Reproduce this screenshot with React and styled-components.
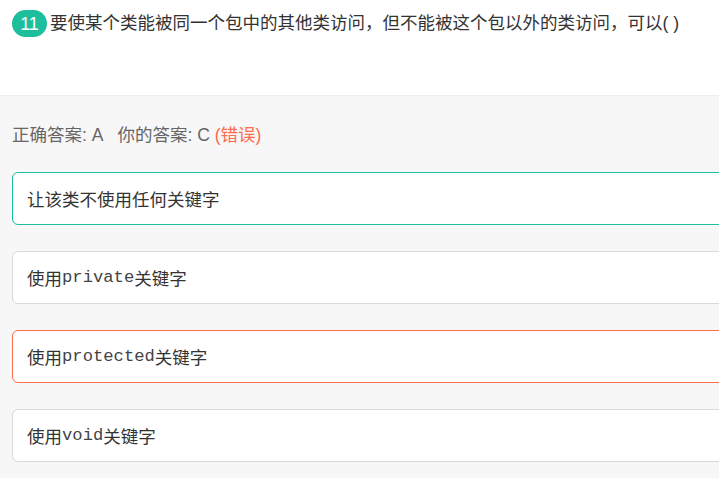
import React from "react";
import styled, { createGlobalStyle } from "styled-components";

const Global = createGlobalStyle`
  html, body { margin: 0; padding: 0; overflow: hidden; background: #f7f7f7; }
  body { font-family: "Liberation Sans", "Noto Sans CJK SC", sans-serif; color: #333; }
`;

const Page = styled.div`
  min-height: 100vh;
  background: #f7f7f7;
`;

const Header = styled.div`
  height: 96px;
  background: #fff;
  border-bottom: 1px solid #ececec;
  padding: 10px 12px 0;
  box-sizing: border-box;
  display: flex;
  align-items: flex-start;
`;

const Badge = styled.span`
  display: inline-flex;
  align-items: center;
  justify-content: center;
  height: 27px;
  min-width: 35px;
  border-radius: 14px;
  background: #1dbe9c;
  color: #fff;
  font-size: 18px;
  line-height: 1;
  flex: none;
`;

const Question = styled.div`
  margin-left: 3px;
  font-size: 17.5px;
  line-height: 27px;
  color: #333;
  white-space: nowrap;
`;

const Body = styled.div`
  padding: 0 12px;
`;

const Result = styled.div`
  margin-top: 26px;
  font-size: 17.5px;
  line-height: 26px;
  color: #666;
  white-space: nowrap;
`;

const Gap = styled.span`
  display: inline-block;
  width: 14px;
`;

const Wrong = styled.span`
  color: #ff6b4e;
`;

const Options = styled.div`
  margin-top: 24px;
  display: flex;
  flex-direction: column;
  gap: 26px;
  margin-right: -20px;
`;

const borderColor = {
  correct: "#1dbe9c",
  wrong: "#ff6b4e",
  normal: "#d9d9d9",
};

const Option = styled.div`
  height: 53px;
  box-sizing: border-box;
  border: 1px solid ${(p) => borderColor[p.$state]};
  border-radius: 6px;
  background: #fff;
  padding: 0 14px;
  display: flex;
  align-items: center;
  font-size: 17.5px;
  color: #333;
  white-space: nowrap;
`;

const Code = styled.code`
  font-family: "Liberation Mono", "Courier New", monospace;
  font-size: 17.2px;
  color: #444;
`;

export default function App() {
  return (
    <Page>
      <Global />
      <Header>
        <Badge>11</Badge>
        <Question>要使某个类能被同一个包中的其他类访问，但不能被这个包以外的类访问，可以( )</Question>
      </Header>
      <Body>
        <Result>
          正确答案: A<Gap />你的答案: C <Wrong>(错误)</Wrong>
        </Result>
        <Options>
          <Option $state="correct">让该类不使用任何关键字</Option>
          <Option $state="normal">使用<Code>private</Code>关键字</Option>
          <Option $state="wrong">使用<Code>protected</Code>关键字</Option>
          <Option $state="normal">使用<Code>void</Code>关键字</Option>
        </Options>
      </Body>
    </Page>
  );
}
